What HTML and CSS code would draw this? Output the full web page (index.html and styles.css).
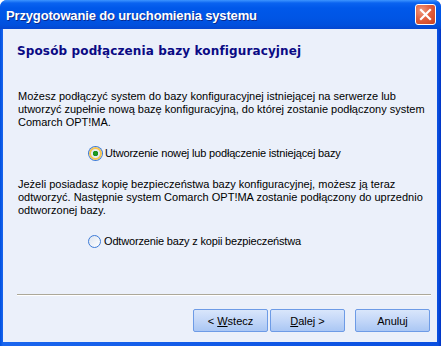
FILE: index.html
```html
<!DOCTYPE html>
<html lang="pl">
<head>
    <meta charset="UTF-8">
    <title>Przygotowanie do uruchomienia systemu</title>
    <link rel="stylesheet" href="styles.css">
</head>
<body>

<div class="window">
    <div class="titlebar">
        <span class="title">Przygotowanie do uruchomienia systemu</span>
        <button class="close" aria-label="Zamknij">
            <svg width="13" height="13" viewBox="0 0 13 13">
                <path d="M2 2 L11 11 M11 2 L2 11" stroke="white" stroke-width="2.2" stroke-linecap="square"/>
            </svg>
        </button>
    </div>

    <div class="client">
        <h2 class="step-title">Sposób podłączenia bazy konfiguracyjnej</h2>

        <p class="info">Możesz podłączyć system do bazy konfiguracyjnej istniejącej na serwerze lub utworzyć zupełnie nową bazę konfiguracyjną, do której zostanie podłączony system Comarch OPT!MA.</p>
        <label class="option">
            <span class="radio checked"></span>
            Utworzenie nowej lub podłączenie istniejącej bazy
        </label>

        <p class="info">Jeżeli posiadasz kopię bezpieczeństwa bazy konfiguracyjnej, możesz ją teraz odtworzyć. Następnie system Comarch OPT!MA zostanie podłączony do uprzednio odtworzonej bazy.</p>
        <label class="option">
            <span class="radio"></span>
            Odtworzenie bazy z kopii bezpieczeństwa
        </label>

        <div class="spacer"></div>
        <div class="separator"></div>

        <div class="buttons">
            <button class="btn">&lt; <u>W</u>stecz</button>
            <button class="btn"><u>D</u>alej &gt;</button>
            <button class="btn cancel">Anuluj</button>
        </div>
    </div>
</div>

</body>
</html>
```

FILE: styles.css
```css
body {
    margin: 0;
    font-family: 'Liberation Sans', Arial, sans-serif;
    background-color: #ffffff;
}
.window {
    width: 441px;
    height: 346px;
    display: flex;
    flex-direction: column;
    background: linear-gradient(to right, #0050e0 0, #1a66ee 3px, #0a4fe0 438px, #0034c4 441px);
    border-radius: 7px 7px 0 0;
    overflow: hidden;
}
.titlebar {
    height: 29px;
    display: flex;
    align-items: center;
    justify-content: space-between;
    padding: 0 5px 0 6px;
    background: linear-gradient(to bottom, #3d95ff 0, #0a63f0 3px, #0058ea 8px, #0055e5 18px, #0150dd 25px, #0546d0 29px);
}
.title {
    color: white;
    font-weight: bold;
    font-size: 13px;
    letter-spacing: -0.15px;
    text-shadow: 1px 1px 0 #0a2a8e;
    margin-top: 1px;
}
.close {
    width: 21px;
    height: 21px;
    padding: 0;
    display: flex;
    align-items: center;
    justify-content: center;
    border: 1px solid white;
    border-radius: 3px;
    background: radial-gradient(circle at 30% 30%, #f09a7e 0, #e2603f 45%, #c9401e 100%);
}
.client {
    flex: 1;
    display: flex;
    flex-direction: column;
    margin: 0 4px 4px 3px;
    padding: 0 9px 0 14px;
    background-color: #ebf0fa;
    font-size: 11px;
    color: #000000;
}
.step-title {
    margin: 15px 0 0 0;
    font-family: 'DejaVu Sans', Verdana, sans-serif;
    font-size: 12px;
    line-height: 15px;
    font-weight: bold;
    letter-spacing: 0.13px;
    color: #0a0a84;
}
.info {
    margin: 18px 0 0 1px;
    line-height: 13px;
    width: 410px;
}
.step-title + .info {
    margin-top: 31px;
}
.option {
    display: flex;
    align-items: center;
    gap: 3px;
    margin: 18px 0 0 71px;
    line-height: 13px;
    letter-spacing: -0.17px;
}
.radio {
    width: 11px;
    height: 11px;
    border: 1px solid #3d7bd7;
    border-radius: 50%;
    background: linear-gradient(135deg, #dce4f0 0, #ffffff 100%);
    box-sizing: content-box;
}
.radio.checked {
    width: 9px;
    height: 9px;
    border: 2px solid #f6c654;
    box-shadow: 0 0 0 1px #3d7bd7;
    background: radial-gradient(circle, #21a121 0, #1d8f1d 2.5px, #e6ecf2 3px);
    margin: 0 0 0 1px;
}
.spacer {
    flex: 1;
}
.separator {
    height: 1px;
    margin: 0 -3px 0 0;
    background-color: #aca899;
    border-bottom: 1px solid #ffffff;
}
.buttons {
    display: flex;
    justify-content: flex-end;
    gap: 2px;
    margin: 13px -2px 10px 0;
}
.btn {
    width: 75px;
    height: 23px;
    padding: 0;
    font-family: 'Liberation Sans', Arial, sans-serif;
    font-size: 11px;
    color: #000000;
    border: 1px solid #6d9be6;
    border-radius: 2px;
    background: linear-gradient(to bottom, #d9e6fb 0, #c3d7f8 50%, #aac7f4 100%);
}
.btn.cancel {
    margin-left: 8px;
}
```
